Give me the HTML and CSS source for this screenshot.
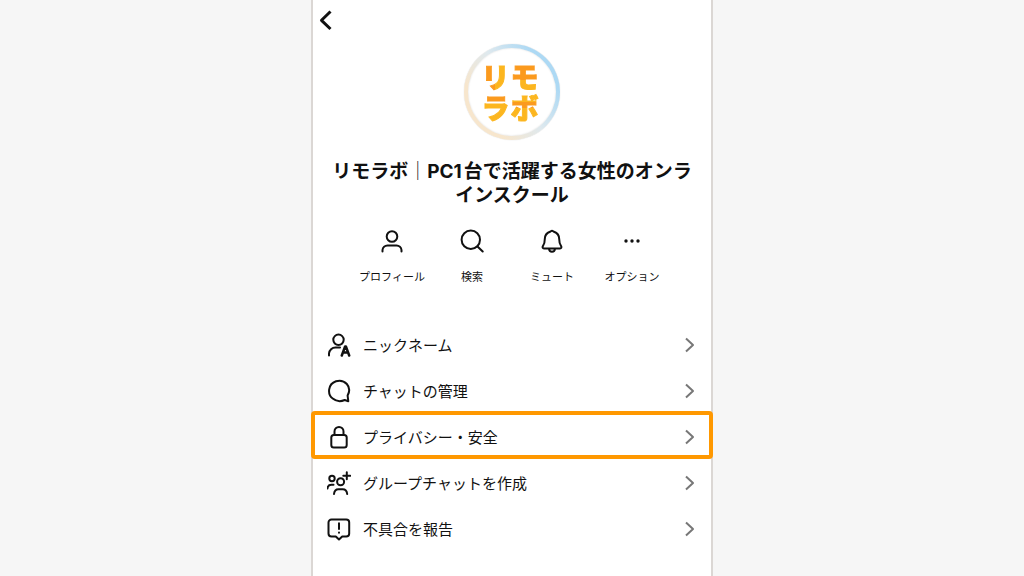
FILE: index.html
```html
<!DOCTYPE html>
<html lang="ja">
<head>
<meta charset="utf-8">
<meta name="viewport" content="width=device-width, initial-scale=1">
<title>リモラボ</title>
<link rel="stylesheet" href="styles.css">
</head>
<body>
<main class="panel">
  <header class="topbar">
    <button class="back" type="button" aria-label="戻る">
      <svg width="16" height="24" viewBox="0 0 16 24"><path d="M13.500 3.500 4.500 12.300l9 8.700"/></svg>
    </button>
  </header>

  <section class="profile">
    <div class="avatar">
      <div class="logo">
        <span class="ri">リ</span><span class="mo">モ</span><span class="ra">ラ</span><span class="bo">ボ</span>
      </div>
    </div>
    <h1 class="name">リモラボ<span class="bar">｜</span><span class="latin">PC1</span>台で活躍する女性のオンラインスクール</h1>
  </section>

  <nav class="actions">
    <button class="action" type="button">
      <svg width="24" height="24" viewBox="0 0 24 24"><circle cx="12" cy="7.500" r="5.300"/><path d="M2.500 22.500v-1.500a5 5 0 0 1 5-4.500h9a5 5 0 0 1 5 4.500v1.500"/></svg>
      <span>プロフィール</span>
    </button>
    <button class="action" type="button">
      <svg width="24" height="24" viewBox="0 0 24 24"><circle cx="10.800" cy="10.800" r="9.200"/><path d="m17.500 17.500 5.200 5"/></svg>
      <span>検索</span>
    </button>
    <button class="action" type="button">
      <svg width="24" height="24" viewBox="0 0 24 24"><path d="M12 1.700c-.8 0-1.200.7-2 1C6.600 3.900 4.800 6.500 4.800 10c0 4-.5 5.300-1.900 7.100-.7 1-.3 2.400 1.100 2.400h16c1.400 0 1.800-1.400 1.100-2.400-1.400-1.800-1.900-3.100-1.900-7.100 0-3.500-1.800-6.100-5.200-7.300-.8-.3-1.200-1-2-1ZM9 19.800c.3 4 5.700 4 6 0"/></svg>
      <span>ミュート</span>
    </button>
    <button class="action" type="button">
      <svg class="dots" width="24" height="24" viewBox="0 0 24 24"><circle cx="6" cy="12" r="1.700"/><circle cx="12" cy="12" r="1.700"/><circle cx="18" cy="12" r="1.700"/></svg>
      <span>オプション</span>
    </button>
  </nav>

  <ul class="menu">
    <li><button class="row" type="button">
      <svg class="icon" width="24" height="24" viewBox="0 0 24 24"><circle cx="11.500" cy="6.800" r="5.200"/><path d="M2 22.500v-2a6.500 6.500 0 0 1 6.500-6H13"/><path stroke-width="2.500" d="M14.800 22.500l3.300-9h.8l3.300 9M16 19.500h5"/></svg>
      <span class="label">ニックネーム</span>
      <svg class="chevron" width="12" height="16" viewBox="0 0 12 16"><path d="m2 1.500 7 6.500-7 6.500"/></svg>
    </button></li>
    <li><button class="row" type="button">
      <svg class="icon" width="24" height="24" viewBox="0 0 24 24"><path d="M20.600 16.500C25.500 7.500 17.500-.3 9 2.200.7 5 .2 15.500 5.700 19.500c4 3.300 9 2.800 12 1.500l3.600 1.200Z"/></svg>
      <span class="label">チャットの管理</span>
      <svg class="chevron" width="12" height="16" viewBox="0 0 12 16"><path d="m2 1.500 7 6.500-7 6.500"/></svg>
    </button></li>
    <li><button class="row marked" type="button">
      <svg class="icon" width="24" height="24" viewBox="0 0 24 24"><rect x="4.300" y="10" width="15.400" height="12.500" rx="2.500"/><path d="M7.500 10V6.500a4.500 4.500 0 0 1 9 0V10"/></svg>
      <span class="label">プライバシー・安全</span>
      <svg class="chevron" width="12" height="16" viewBox="0 0 12 16"><path d="m2 1.500 7 6.500-7 6.500"/></svg>
    </button></li>
    <li><button class="row" type="button">
      <svg class="icon" width="24" height="24" viewBox="0 0 24 24"><circle cx="5" cy="7.500" r="2.700"/><circle cx="13.600" cy="10.800" r="3.500"/><path d="M.5 17.500c.2-2.500 1.500-3.700 4-3.700h2M7 23c.3-3.200 2-4.800 4.500-4.800h4.200c2.500 0 4.200 1.600 4.500 4.800M19.800 1.300v7M16.300 4.800h7"/></svg>
      <span class="label">グループチャットを作成</span>
      <svg class="chevron" width="12" height="16" viewBox="0 0 12 16"><path d="m2 1.500 7 6.500-7 6.500"/></svg>
    </button></li>
    <li><button class="row" type="button">
      <svg class="icon" width="24" height="24" viewBox="0 0 24 24"><path d="M4.500 2.500h14.700a3 3 0 0 1 3 3v11a3 3 0 0 1-3 3h-4L12 22.500l-3.200-3H4.500a3 3 0 0 1-3-3v-11a3 3 0 0 1 3-3ZM12 6.300v5.700M12 15.500v.2"/></svg>
      <span class="label">不具合を報告</span>
      <svg class="chevron" width="12" height="16" viewBox="0 0 12 16"><path d="m2 1.500 7 6.500-7 6.500"/></svg>
    </button></li>
  </ul>
</main>
</body>
</html>
```
FILE: styles.css
```css
* { box-sizing: border-box; }

body {
  margin: 0;
  background: #f6f6f6;
  color: #111;
  font-family: "Noto Sans CJK JP", sans-serif;
}

button {
  margin: 0;
  padding: 0;
  border: 0;
  background: none;
  color: inherit;
  font: inherit;
  cursor: pointer;
}

svg {
  display: block;
  flex: none;
  fill: none;
  stroke: #111;
  stroke-width: 2;
  stroke-linecap: round;
  stroke-linejoin: round;
}

.panel {
  max-width: 402px;
  min-height: 100vh;
  margin: 0 auto;
  background: #fff;
  border: solid #dbd7d4;
  border-width: 0 2px;
}

.topbar {
  display: flex;
  padding: 8px 4px 0;
}

.back svg { stroke-width: 3; stroke-linecap: butt; }

.profile {
  display: flex;
  flex-direction: column;
  align-items: center;
  padding: 12px 16px 0;
}

.avatar {
  display: grid;
  place-items: center;
  width: 96px;
  height: 96px;
  border: 4px solid transparent;
  border-radius: 50%;
  background:
    linear-gradient(#fff, #fff) padding-box,
    linear-gradient(235deg, #add9f4 20%, #dfe9ee 48%, #f7e6cd 75%) border-box;
  box-shadow: inset 0 0 2px #dcdcdc, 0 0 1px #c5c5c5;
}

.logo {
  display: grid;
  grid-template-columns: repeat(2, 29px);
  padding-right: 3px;
  font-size: 28px;
  font-weight: 900;
  line-height: 31px;
}

.logo span {
  color: transparent;
  background-clip: text;
  -webkit-background-clip: text;
  -webkit-text-stroke: 1px transparent;
}

.logo .ri { background-image: linear-gradient(90deg, #fb9a1e 45%, #fcb61f 45%); }
.logo .mo { background-image: linear-gradient(#fb9a1e 60%, #fcb61f 60%); }
.logo .ra { background-image: linear-gradient(#fb9a1e 36%, #fcb61f 36%); }
.logo .bo { background-image: linear-gradient(#fcb61f 32%, #fb9a1e 32%, #fb9a1e 52%, #fcb61f 52%); }

.name {
  margin: 18px 0 0;
  font-size: 19px;
  font-weight: 700;
  line-height: 24px;
  text-align: center;
  word-break: break-all;
}

.bar { font-weight: 300; }

.latin {
  margin-right: 2px;
  font-family: Inter, "Liberation Sans", sans-serif;
  font-weight: 700;
  line-height: 1;
}

.actions {
  display: grid;
  grid-template-columns: repeat(4, 80px);
  justify-content: center;
  margin-top: 23px;
}

.action {
  display: flex;
  flex-direction: column;
  align-items: center;
  gap: 15px;
  font-size: 11px;
  line-height: 16px;
  white-space: nowrap;
}

.dots { fill: #111; stroke: none; }

.menu {
  margin: 38px 0 0;
  padding: 0;
  list-style: none;
}

.row {
  position: relative;
  display: flex;
  align-items: center;
  gap: 12px;
  width: 100%;
  height: 46px;
  padding: 0 15px 0 14px;
  font-size: 15px;
  line-height: 22px;
  text-align: left;
}

.label {
  flex: 1;
  padding-bottom: 1px;
}

.chevron { stroke: #777; stroke-linecap: butt; }

.marked::after {
  content: "";
  position: absolute;
  inset: -3px -2px 1px;
  border: 4px solid #ff9800;
  border-radius: 4px;
}
```
